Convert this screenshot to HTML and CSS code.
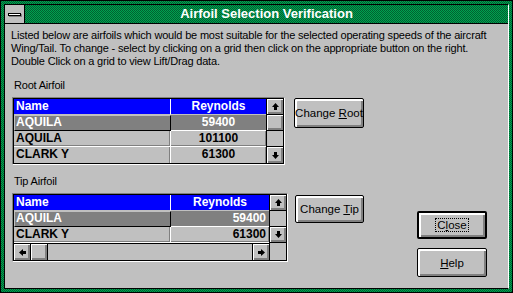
FILE: index.html
```html
<!DOCTYPE html>
<html lang="en">
<head>
    <meta charset="UTF-8">
    <title>Airfoil Selection Verification</title>
    <link rel="stylesheet" href="styles.css">
</head>
<body>
    <div class="window">
        <div class="frame">
            <div class="titlebar">
                <div class="sysmenu"><span class="sysbar"></span></div>
                <div class="title">Airfoil Selection Verification</div>
            </div>
            <div class="client">
                <p class="intro">Listed below are airfoils which would be most suitable for the selected operating speeds of the aircraft<br>Wing/Tail. To change - select by clicking on a grid then click on the appropriate button on the right.<br>Double Click on a grid to view Lift/Drag data.</p>

                <div class="label label-root">Root Airfoil</div>
                <div class="row">
                    <div class="grid">
                        <div class="grid-body">
                            <div class="cols">
                                <div class="tr head"><div class="td name">Name</div><div class="td reyn">Reynolds</div></div>
                                <div class="tr sel"><div class="td name">AQUILA</div><div class="td reyn">59400</div></div>
                                <div class="tr"><div class="td name">AQUILA</div><div class="td reyn">101100</div></div>
                                <div class="tr last"><div class="td name">CLARK Y</div><div class="td reyn">61300</div></div>
                            </div>
                            <div class="vscroll">
                                <div class="sb"><svg width="7" height="7" viewBox="0 0 7 7"><polygon points="3.5,0 7,4 5,4 5,7 2,7 2,4 0,4" fill="#000"/></svg></div>
                                <div class="sb"></div>
                                <div class="track"></div>
                                <div class="sb sb-last"><svg width="7" height="7" viewBox="0 0 7 7"><polygon points="3.5,7 7,3 5,3 5,0 2,0 2,3 0,3" fill="#000"/></svg></div>
                            </div>
                        </div>
                    </div>
                    <button class="btn btn-root">Change <u>R</u>oot</button>
                </div>

                <div class="label label-tip">Tip Airfoil</div>
                <div class="row">
                    <div class="grid">
                        <div class="grid-body">
                            <div class="cols">
                                <div class="tr head"><div class="td name">Name</div><div class="td reyn wide">Reynolds</div></div>
                                <div class="tr sel"><div class="td name">AQUILA</div><div class="td reyn wide right">59400</div></div>
                                <div class="tr"><div class="td name">CLARK Y</div><div class="td reyn wide right">61300</div></div>
                                <div class="hscroll">
                                    <div class="sb sb-h"><svg width="7" height="7" viewBox="0 0 7 7"><polygon points="0,3.5 4,0 4,2 7,2 7,5 4,5 4,7" fill="#000"/></svg></div>
                                    <div class="sb sb-h"></div>
                                    <div class="htrack"></div>
                                    <div class="sb sb-h sb-right"><svg width="7" height="7" viewBox="0 0 7 7"><polygon points="7,3.5 3,0 3,2 0,2 0,5 3,5 3,7" fill="#000"/></svg></div>
                                </div>
                            </div>
                            <div class="vscroll">
                                <div class="sb"><svg width="7" height="7" viewBox="0 0 7 7"><polygon points="3.5,0 7,4 5,4 5,7 2,7 2,4 0,4" fill="#000"/></svg></div>
                                <div class="track"></div>
                                <div class="sb"><svg width="7" height="7" viewBox="0 0 7 7"><polygon points="3.5,7 7,3 5,3 5,0 2,0 2,3 0,3" fill="#000"/></svg></div>
                                <div class="corner"></div>
                            </div>
                        </div>
                    </div>
                    <button class="btn btn-tip">Change <u>T</u>ip</button>
                    <div class="side">
                        <button class="btn btn-default"><span class="focus">C<u>l</u>ose</span></button>
                        <button class="btn btn-help"><u>H</u>elp</button>
                    </div>
                </div>
            </div>
        </div>
    </div>
</body>
</html>
```

FILE: styles.css
```css
body {
    margin: 0;
    font-family: "Liberation Sans", Arial, sans-serif;
    font-size: 11px;
    color: #000;
}

.window {
    width: 513px;
    height: 293px;
    box-sizing: border-box;
    border: 1px solid #000;
    padding: 3px;
    display: flex;
    background: repeating-conic-gradient(#00a050 0 25%, #006030 0 50%) 0 0 / 2px 2px;
}

.frame {
    flex: 1;
    min-width: 0;
    display: flex;
    flex-direction: column;
    border: 1px solid #000;
    border-right-color: #fff;
}

.titlebar {
    height: 18px;
    display: flex;
    border-bottom: 1px solid #000;
    background: repeating-conic-gradient(#00a050 0 25%, #006030 0 50%) 0 0 / 2px 2px;
}

.sysmenu {
    width: 19px;
    background-color: #c0c0c0;
    border-right: 1px solid #000;
    display: flex;
    align-items: center;
    justify-content: center;
}

.sysbar {
    width: 11px;
    height: 1px;
    background-color: #fff;
    border: 1px solid #000;
    box-shadow: 1px 1px 0 #808080;
}

.title {
    flex: 1;
    text-align: center;
    color: #fff;
    font-weight: bold;
    font-size: 13px;
    line-height: 18px;
}

.client {
    flex: 1;
    min-width: 0;
    overflow: hidden;
    background-color: #c0c0c0;
    padding: 5px 6px 0;
}

.intro {
    margin: 0;
    font-size: 11px;
    line-height: 13px;
    letter-spacing: -0.18px;
    white-space: nowrap;
}

.label {
    margin-left: 3px;
    line-height: 13px;
    letter-spacing: -0.2px;
}

.label-root {
    margin-top: 11px;
}

.label-tip {
    margin-top: 10px;
}

.row {
    display: flex;
    align-items: flex-start;
    margin-top: 5px;
}

/* grid control */
.grid {
    margin-left: 1px;
    border: 1px solid;
    border-color: #808080 #fff #fff #808080;
}

.grid-body {
    display: flex;
    border: 1px solid #000;
}

.cols {
    display: flex;
    flex-direction: column;
}

.tr {
    display: flex;
    height: 16px;
}

.td {
    box-sizing: border-box;
    height: 16px;
    padding: 0 2px;
    font-size: 12px;
    font-weight: bold;
    line-height: 15px;
    white-space: nowrap;
    border-right: 1px solid #fff;
    border-bottom: 1px solid #fff;
    box-shadow: inset -1px -1px 0 #808080;
}

.name {
    width: 157px;
}

.reyn {
    width: 95px;
    text-align: center;
    border-right: none;
}

.reyn.wide {
    width: 98px;
}

.reyn.right {
    text-align: right;
    padding-right: 3px;
}

.head .td {
    background-color: #0000ff;
    color: #fff;
    box-shadow: none;
    border-bottom-color: #c0c0c0;
}

.sel .td {
    background-color: #808080;
    color: #fff;
}

.sel .name {
    border: 1px solid;
    border-color: #c0c0c0 #000 #000 #c0c0c0;
    box-shadow: none;
    padding-left: 1px;
    line-height: 13px;
}

.last .td {
    border-bottom: none;
    box-shadow: inset -1px 0 0 #808080;
}

.vscroll {
    width: 16px;
    display: flex;
    flex-direction: column;
    border-left: 1px solid #000;
}

.sb {
    box-sizing: border-box;
    width: 16px;
    height: 16px;
    display: flex;
    align-items: center;
    justify-content: center;
    background-color: #c0c0c0;
    border-bottom: 1px solid #000;
    box-shadow: inset 1px 1px 0 #fff, inset -2px -2px 0 #808080;
}

.sb-last {
    border-bottom: none;
}

.track {
    height: 16px;
    box-sizing: border-box;
    background-color: #c0c0c0;
    border-bottom: 1px solid #000;
}

.corner {
    flex: 1;
    background-color: #c0c0c0;
}

.hscroll {
    display: flex;
    height: 16px;
    border-top: 1px solid #000;
}

.sb-h {
    border-bottom: none;
    border-right: 1px solid #000;
    width: 17px;
}

.sb-right {
    border-right: none;
    border-left: 1px solid #000;
}

.htrack {
    flex: 1;
    background-color: #c0c0c0;
}

/* push buttons */
.btn {
    font-family: inherit;
    font-size: 11.5px;
    color: #000;
    padding: 0;
    white-space: nowrap;
    background-color: #c0c0c0;
    border: 1px solid #000;
    border-radius: 2px;
    box-shadow: inset 1px 1px 0 #fff, inset 2px 2px 0 #fff, inset -2px -2px 0 #808080;
    cursor: pointer;
}

.btn-root {
    width: 70px;
    height: 30px;
    margin-left: 9px;
    margin-top: 1px;
}

.btn-tip {
    width: 69px;
    height: 28px;
    margin-left: 7px;
    margin-top: 2px;
}

.side {
    margin-left: auto;
    margin-right: 15px;
    display: flex;
    flex-direction: column;
}

.btn-default {
    width: 70px;
    height: 28px;
    margin-top: 18px;
    border-width: 2px;
}

.btn-help {
    width: 70px;
    height: 29px;
    margin-top: 9px;
}

.focus {
    outline: 1px dotted #000;
    padding: 0 1px;
}
```
